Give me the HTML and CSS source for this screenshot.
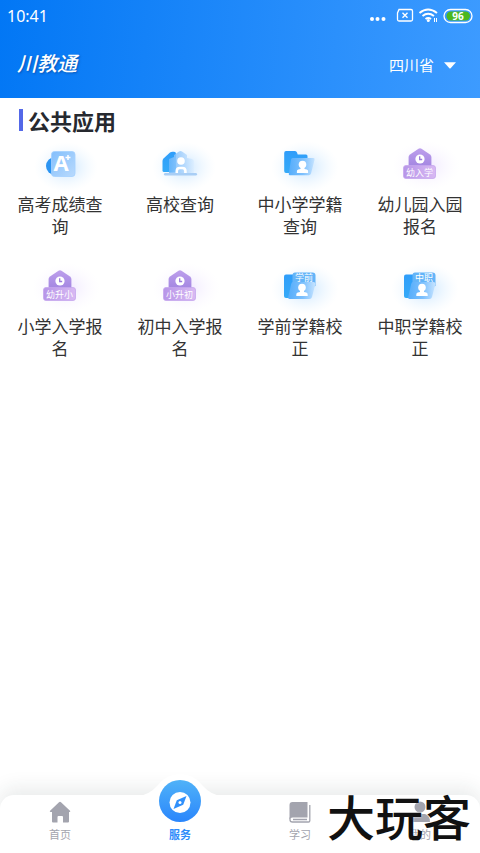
FILE: index.html
```html
<!DOCTYPE html>
<html lang="zh-CN">
<head>
    <meta charset="UTF-8">
    <meta name="viewport" content="width=device-width, initial-scale=1.0">
    <title>川教通</title>
    <link rel="stylesheet" href="styles.css">
</head>
<body>
    <!-- shared gradients and icon parts -->
    <svg class="defs" width="0" height="0" aria-hidden="true">
        <defs>
            <radialGradient id="glowBlue">
                <stop offset="0" stop-color="#8cc8ff" stop-opacity=".5"/>
                <stop offset=".5" stop-color="#b4dcff" stop-opacity=".25"/>
                <stop offset="1" stop-color="#d8eeff" stop-opacity="0"/>
            </radialGradient>
            <radialGradient id="glowPurple">
                <stop offset="0" stop-color="#c8a8ff" stop-opacity=".3"/>
                <stop offset=".5" stop-color="#dccaff" stop-opacity=".15"/>
                <stop offset="1" stop-color="#eee6ff" stop-opacity="0"/>
            </radialGradient>
            <linearGradient id="deep" x1="0" y1="0" x2="0" y2="1">
                <stop offset="0" stop-color="#2f9dfa"/>
                <stop offset="1" stop-color="#35aaf8"/>
            </linearGradient>
            <linearGradient id="card" x1="0" y1="0" x2="1" y2="1">
                <stop offset="0" stop-color="#83bffc"/>
                <stop offset="1" stop-color="#b9dafd"/>
            </linearGradient>
            <linearGradient id="glass" x1="0" y1="0" x2="1" y2="0">
                <stop offset="0" stop-color="#55adfb"/>
                <stop offset=".55" stop-color="#7dc0fd"/>
                <stop offset="1" stop-color="#c5e3ff"/>
            </linearGradient>
            <linearGradient id="pale" x1="0" y1="0" x2="1" y2="0">
                <stop offset="0" stop-color="#6db7fb"/>
                <stop offset=".5" stop-color="#a4d0fc"/>
                <stop offset="1" stop-color="#dceeff"/>
            </linearGradient>
            <linearGradient id="violet" x1="0" y1="0" x2="0" y2="1">
                <stop offset="0" stop-color="#bd9fec"/>
                <stop offset="1" stop-color="#a083e0"/>
            </linearGradient>
            <linearGradient id="tag" x1="0" y1="0" x2="1" y2="0">
                <stop offset="0" stop-color="#b795e8"/>
                <stop offset="1" stop-color="#d8b9f3"/>
            </linearGradient>
            <linearGradient id="round" x1="0" y1="0" x2="0" y2="1">
                <stop offset="0" stop-color="#50b2f8"/>
                <stop offset="1" stop-color="#2a86fc"/>
            </linearGradient>
        </defs>
        <symbol id="house" viewBox="0 0 120 54">
            <ellipse cx="66" cy="27" rx="34" ry="25" fill="url(#glowPurple)"/>
            <path d="M50 15.500L58.500 9.800q1.500-1 3 0L70 15.500q1.400 1 1.400 2.500V30H48.600V18q0-1.500 1.400-2.500z" fill="url(#violet)"/>
            <circle cx="60" cy="20" r="4.600" fill="#fff"/>
            <path d="M59.700 17.300v3.200h2.500" fill="none" stroke="#9a7bdc" stroke-width="1.300"/>
            <rect x="43.500" y="26.500" width="32" height="13" rx="2.500" fill="url(#tag)" stroke="#c5a6ee" stroke-width=".8"/>
        </symbol>
        <symbol id="person" viewBox="0 0 12 14">
            <circle cx="6" cy="4.500" r="3.800"/>
            <path d="M4 6h4v3l2.300.6q1.400.5 1.400 1.900V13H.3v-1.500q0-1.400 1.400-1.900L4 9z"/>
        </symbol>
        <symbol id="cornerFolder" viewBox="0 0 120 54">
            <ellipse cx="65" cy="28" rx="34" ry="26" fill="url(#glowBlue)"/>
            <rect x="44" y="13.500" width="16" height="23.500" rx="2" fill="url(#deep)"/>
            <path d="M55 11.500h17.500q3 0 3 3V25l-20 5h-3V14.500q0-3 2.500-3z" fill="#64b4f8"/>
            <path d="M53 21h20.500q2.200 0 1.700 2.500L72 36q-.6 2-2.500 2h-20q-1.700 0-1.300-2l3-13q.4-2 1.800-2z" fill="url(#glass)"/>
        </symbol>
    </svg>

    <header class="header">
        <div class="status">
            <span class="time">10:41</span>
            <svg class="status-icons" width="104" height="18" viewBox="0 0 104 18" fill="none" stroke="#fff">
                <g fill="#fff" stroke="none">
                    <circle cx="3" cy="12" r="2"/>
                    <circle cx="8.500" cy="12" r="2"/>
                    <circle cx="14.500" cy="12" r="2"/>
                </g>
                <path d="M30 2.500h12q1.500 0 1.500 1.500v8.500q0 1.500-1.500 1.500H30q-1.500 0-1.500-1.500V6z" stroke-width="1.300"/>
                <path d="M33.500 5.800l5 5m0-5l-5 5" stroke-width="1.400"/>
                <path d="M50.500 6q8.500-7 17.500 0M53.500 9q5.500-4.400 11.500 0M56.500 12q2.700-2 5.500 0" stroke-width="2"/>
                <circle cx="59.300" cy="13.500" r="1.500" fill="#fff" stroke="none"/>
                <path d="M65.500 11v4m2-4v4"/>
                <rect x="75" y="2.500" width="28" height="13" rx="6.500" stroke-width="1.300"/>
                <rect x="77.500" y="4.500" width="23.500" height="9" rx="4.500" fill="#4cb81e" stroke="none"/>
                <text class="battery" x="89" y="12.500">96</text>
            </svg>
        </div>
        <div class="topbar">
            <h1 class="logo">川教通</h1>
            <button class="region" type="button">四川省
                <svg width="12" height="7" viewBox="0 0 12 7"><path d="M0 .3h12L6.600 6.200q-.6.600-1.200 0z" fill="#fff"/></svg>
            </button>
        </div>
    </header>

    <main class="content">
        <h2 class="section-title">公共应用</h2>
        <div class="apps">
            <a class="app" href="#">
                <svg class="app-icon" viewBox="0 0 120 54">
                    <ellipse cx="66" cy="28" rx="32" ry="25" fill="url(#glowBlue)"/>
                    <circle cx="55" cy="27" r="9" fill="#2b94f2"/>
                    <rect x="51.500" y="12.500" width="23.500" height="25" rx="3" fill="url(#card)" stroke="#a3d0ff" stroke-width=".8"/>
                    <text class="grade" x="61" y="32">A</text>
                    <path d="M68 16v5m-2.500-2.500h5" stroke="#fff" stroke-width="1.500"/>
                </svg>
                <span>高考成绩查询</span>
            </a>
            <a class="app" href="#">
                <svg class="app-icon" viewBox="0 0 120 54">
                    <ellipse cx="64" cy="28" rx="32" ry="25" fill="url(#glowBlue)"/>
                    <path d="M42.500 22q0-1.500 1-2.500l6.500-6q1-.8 2.500-.8h1.500q2 0 2 2V33H44q-1.500 0-1.500-1.500z" fill="url(#deep)"/>
                    <path d="M49 20l5-2v-2l5-3.500q1.500-1 3 0l5 3.500v3l5 1q2 .5 2 2.500V34H49z" fill="url(#pale)" opacity=".85"/>
                    <rect x="44" y="34" width="33" height="2.500" rx="1.200" fill="#a9cef5"/>
                    <circle cx="61" cy="22" r="3.800" fill="#fff"/>
                    <path d="M56.800 34v-2q0-3 3-3h2.600q3 0 3 3v2" fill="none" stroke="#fff" stroke-width="2.600"/>
                </svg>
                <span>高校查询</span>
            </a>
            <a class="app" href="#">
                <svg class="app-icon" viewBox="0 0 120 54">
                    <ellipse cx="65" cy="28" rx="34" ry="26" fill="url(#glowBlue)"/>
                    <path d="M46 12h9q1.500 0 2 1.500l.7 2H66q1.500 0 1.500 1.500v17H46q-1.800 0-1.800-2V14q0-2 1.800-2z" fill="url(#deep)"/>
                    <path d="M52.500 19h21q1.500 0 1 2L71 34.500q-.6 1.800-2.200 1.800H50q-1.500 0-1.200-1.600L51 20.500q.3-1.500 1.500-1.500z" fill="url(#glass)"/>
                    <use href="#person" x="56.500" y="21" width="12" height="14" fill="#fff"/>
                </svg>
                <span>中小学学籍查询</span>
            </a>
            <a class="app" href="#">
                <svg class="app-icon" viewBox="0 0 120 54">
                    <use href="#house"/>
                    <text class="tag-text" x="59.500" y="36.500">幼入学</text>
                </svg>
                <span>幼儿园入园报名</span>
            </a>
            <a class="app" href="#">
                <svg class="app-icon" viewBox="0 0 120 54">
                    <use href="#house"/>
                    <text class="tag-text" x="59.500" y="36.500">幼升小</text>
                </svg>
                <span>小学入学报名</span>
            </a>
            <a class="app" href="#">
                <svg class="app-icon" viewBox="0 0 120 54">
                    <use href="#house"/>
                    <text class="tag-text" x="59.500" y="36.500">小升初</text>
                </svg>
                <span>初中入学报名</span>
            </a>
            <a class="app" href="#">
                <svg class="app-icon" viewBox="0 0 120 54">
                    <use href="#cornerFolder"/>
                    <text class="folder-text" x="64" y="20">学前</text>
                    <use href="#person" x="56" y="22" width="12" height="14" fill="#fff"/>
                </svg>
                <span>学前学籍校正</span>
            </a>
            <a class="app" href="#">
                <svg class="app-icon" viewBox="0 0 120 54">
                    <use href="#cornerFolder"/>
                    <text class="folder-text" x="64" y="20">中职</text>
                    <use href="#person" x="56" y="22" width="12" height="14" fill="#fff"/>
                </svg>
                <span>中职学籍校正</span>
            </a>
        </div>
    </main>

    <nav class="tabbar">
        <a class="tab" href="#">
            <svg width="24" height="24" viewBox="0 0 24 24" fill="#a3a4ae">
                <path d="M11 2.200q1-.9 2 0l9 8.600q.9 1-.4 1.200H21v9.500q0 1-1 1h-5V17q0-1-1-1h-3.500q-1 0-1 1v5.500H5q-1 0-1-1V12H2.500q-1.300-.2-.4-1.200z"/>
            </svg>
            <span>首页</span>
        </a>
        <a class="tab active" href="#">
            <svg class="bump" width="84" height="50" viewBox="0 0 84 50">
                <path d="M0 23Q11 22 19 13Q28 1 42 1T65 13Q73 22 84 23V50H0z" fill="#fff"/>
                <circle cx="42" cy="28" r="21" fill="url(#round)"/>
                <circle cx="42" cy="29.500" r="10.500" fill="#fff"/>
                <path d="M48.500 23l-3.300 8.700-9.700 4.300 3.300-8.700z" fill="#3090fb"/>
                <circle cx="42" cy="29.500" r="1.500" fill="#fff"/>
            </svg>
            <span>服务</span>
        </a>
        <a class="tab" href="#">
            <svg width="24" height="24" viewBox="0 0 24 24" fill="none" stroke="#a3a4ae">
                <path d="M4.500 2h15v15.500h-15q-2 0-3 1.500V5q0-3 3-3z" fill="#a3a4ae" stroke="none"/>
                <path d="M2 17.500v2.200q0 2.300 2.500 2.300h16q1.300 0 1.300-1.300V5M5 19.500h14" stroke-width="1.300"/>
            </svg>
            <span>学习</span>
        </a>
        <a class="tab" href="#">
            <svg width="24" height="24" viewBox="0 0 24 24" fill="#a3a4ae">
                <circle cx="12" cy="7" r="5.500"/>
                <path d="M7 14h10q5 1 5 8H2q0-7 5-8z"/>
            </svg>
            <span>我的</span>
        </a>
    </nav>
    <div class="watermark">大玩客</div>
</body>
</html>
```

FILE: styles.css
```css
* {
    box-sizing: border-box;
}
body {
    margin: 0;
    min-height: 100vh;
    display: flex;
    flex-direction: column;
    position: relative;
    background: #fff;
    color: #333;
    font-family: "Noto Sans CJK SC", sans-serif;
}
a {
    color: inherit;
    text-decoration: none;
}
.defs {
    position: absolute;
}

/* header */
.header {
    background: linear-gradient(95deg, #0277f5, #3d9bff);
    color: #fff;
    padding-bottom: 8px;
}
.status {
    display: flex;
    justify-content: space-between;
    align-items: center;
    height: 32px;
    padding: 0 7px;
}
.time {
    font-family: "Noto Sans", sans-serif;
    font-size: 16px;
}
.battery {
    font-family: "Noto Sans", sans-serif;
    font-size: 10px;
    font-weight: 700;
    fill: #fff;
    stroke: none;
    text-anchor: middle;
}
.topbar {
    display: flex;
    justify-content: space-between;
    align-items: center;
    height: 50px;
    margin-top: 8px;
    padding: 0 24px 0 17px;
}
.logo {
    margin: 0;
    padding-bottom: 4px;
    font-size: 20px;
    font-style: italic;
    font-weight: 500;
    line-height: 30px;
    text-shadow: 1px 1px 2px rgba(0, 50, 120, 0.5);
}
.region {
    display: flex;
    align-items: center;
    gap: 10px;
    padding: 0;
    border: none;
    background: none;
    color: #fff;
    font-family: inherit;
    font-size: 15px;
    line-height: 24px;
    cursor: pointer;
}

/* app grid */
.content {
    flex: 1;
}
.section-title {
    display: flex;
    align-items: center;
    gap: 5px;
    margin: 6px 0 3px;
    padding-left: 19px;
    color: #26292f;
    font-size: 22px;
    font-weight: 700;
    line-height: 32px;
}
.section-title::before {
    content: "";
    width: 4px;
    height: 22px;
    background: #5468e8;
}
.apps {
    display: grid;
    grid-template-columns: repeat(4, 1fr);
    row-gap: 24px;
}
.app {
    display: flex;
    flex-direction: column;
    align-items: center;
    font-size: 17px;
    line-height: 22px;
    text-align: center;
}
.app span {
    padding: 0 16px;
}
.app-icon {
    width: 100%;
    height: 54px;
}
.grade {
    font-family: "Open Sans", sans-serif;
    font-size: 22px;
    font-weight: 700;
    fill: #fff;
    text-anchor: middle;
}
.tag-text,
.folder-text {
    font-size: 9px;
    fill: #fff;
    text-anchor: middle;
}

/* bottom tabs */
.tabbar {
    display: grid;
    grid-template-columns: repeat(4, 1fr);
    height: 58px;
    border-radius: 14px 14px 0 0;
    background: #fff;
    box-shadow: 0 -6px 20px rgba(30, 50, 50, 0.1);
}
.tab {
    display: flex;
    flex-direction: column;
    align-items: center;
    position: relative;
    padding-top: 5px;
    color: #a3a4ae;
    font-size: 11px;
    line-height: 20px;
}
.tab.active {
    padding-top: 29px;
    color: #2e8bfa;
    font-weight: 700;
}
.bump {
    position: absolute;
    top: -22px;
    left: 50%;
    margin-left: -42px;
}
.watermark {
    position: absolute;
    right: 9px;
    bottom: 6px;
    color: #111;
    font-size: 48px;
    font-weight: 500;
    line-height: 64px;
    text-shadow: 0 0 2px #fff;
    pointer-events: none;
}
```
